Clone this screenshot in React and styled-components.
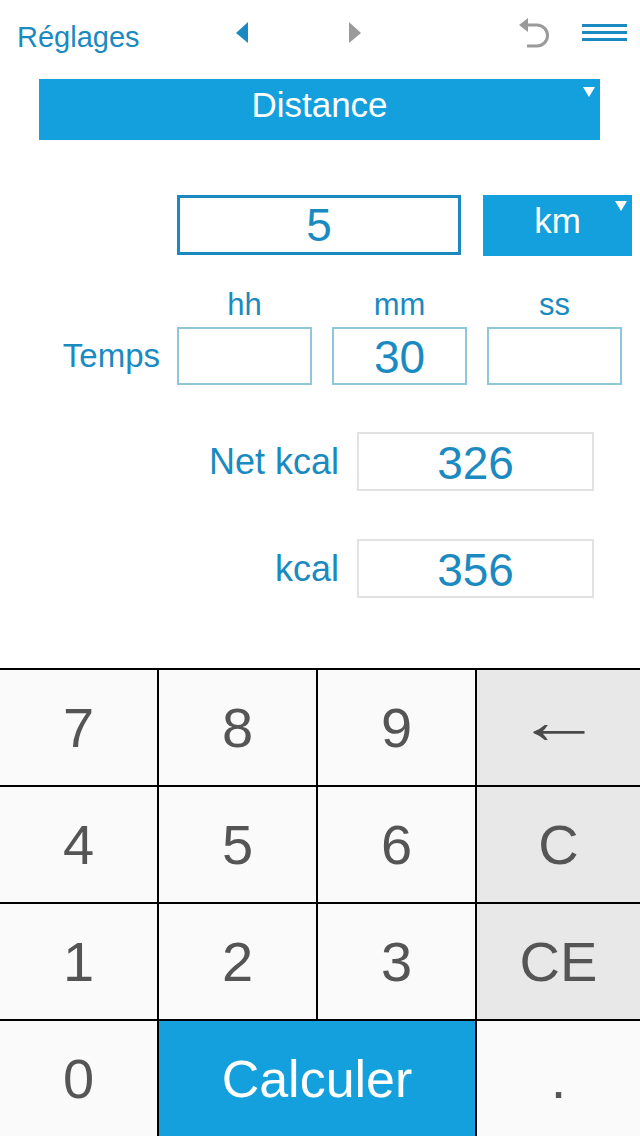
import React from "react";
import styled, { createGlobalStyle } from "styled-components";

const BLUE = "#1a8ac0";
const BRIGHT = "#13a0dd";

const Global = createGlobalStyle`
  html, body { margin: 0; padding: 0; background: #fff; }
  body { font-family: "Liberation Sans", Arial, Helvetica, sans-serif; }
  * { box-sizing: border-box; }
`;

const Page = styled.div`
  width: 640px;
  min-height: 100vh;
  display: flex;
  flex-direction: column;
  background: #fff;
`;

const Header = styled.div`
  height: 72px;
  display: flex;
  align-items: center;
`;

const Title = styled.div`
  flex: 0 0 235px;
  padding-left: 17px;
  color: ${BLUE};
  font-size: 29px;
  padding-top: 2px;
`;

const NavGroup = styled.div`
  display: flex;
  align-items: center;
  gap: 99px;
  margin-top: -6px;
`;

const Spacer = styled.div`
  flex: 1;
`;

const Actions = styled.div`
  display: flex;
  align-items: center;
  gap: 30px;
  padding-right: 13px;
  margin-top: -6px;
`;

const SelectBar = styled.div`
  position: relative;
  margin: 7px 40px 0 39px;
  height: 61px;
  background: ${BRIGHT};
  color: #fff;
  font-size: 35px;
  display: flex;
  align-items: center;
  justify-content: center;
  padding-bottom: 10px;
`;

const Caret = styled.span`
  position: absolute;
  top: ${(p) => p.$top}px;
  right: ${(p) => p.$right}px;
  width: 0;
  height: 0;
  border-left: 6px solid transparent;
  border-right: 6px solid transparent;
  border-top: 10px solid #fff;
`;

const DistanceRow = styled.div`
  display: flex;
  gap: 22px;
  padding-left: 177px;
  margin-top: 55px;
`;

const MainInput = styled.div`
  width: 284px;
  height: 60px;
  border: 3px solid ${BLUE};
  color: ${BLUE};
  font-size: 46px;
  display: flex;
  align-items: center;
  justify-content: center;
`;

const UnitButton = styled.div`
  position: relative;
  width: 149px;
  height: 61px;
  background: ${BRIGHT};
  color: #fff;
  font-size: 35px;
  display: flex;
  align-items: center;
  justify-content: center;
  padding-bottom: 10px;
`;

const TimeGrid = styled.div`
  display: grid;
  grid-template-columns: 157px repeat(3, 135px);
  grid-template-rows: 36px 58px;
  column-gap: 20px;
  row-gap: 4px;
  margin-top: 31px;
  align-items: center;
`;

const UnitLabel = styled.div`
  grid-row: 1;
  grid-column: ${(p) => p.$col};
  text-align: center;
  color: ${BLUE};
  font-size: 31px;
  line-height: 36px;
`;

const RowLabel = styled.div`
  text-align: right;
  color: ${BLUE};
  font-size: ${(p) => p.$size || 36}px;
  margin-right: ${(p) => p.$shift || 0}px;
`;

const TimeLabel = styled(RowLabel)`
  grid-row: 2;
  grid-column: 1;
`;

const TimeBox = styled.div`
  grid-row: 2;
  grid-column: ${(p) => p.$col};
  height: 58px;
  border: 2px solid #8ec6da;
  color: ${BLUE};
  font-size: 46px;
  display: flex;
  align-items: center;
  justify-content: center;
  padding-top: 2px;
`;

const Results = styled.div`
  display: grid;
  grid-template-columns: 339px 237px;
  column-gap: 18px;
  row-gap: 48px;
  margin-top: 47px;
  align-items: center;
`;

const ResultBox = styled.div`
  height: 59px;
  border: 2px solid #e2e2e2;
  color: ${BLUE};
  font-size: 46px;
  display: flex;
  align-items: center;
  justify-content: center;
  padding-top: 3px;
`;

const Keypad = styled.div`
  margin-top: auto;
  display: grid;
  grid-template-columns: 157px 157px 157px 1fr;
  grid-auto-rows: 115px;
  gap: 2px;
  border-top: 2px solid #000;
  background: #000;
`;

const Key = styled.div`
  grid-column: span ${(p) => p.$span || 1};
  background: ${(p) =>
    p.$variant === "primary" ? BRIGHT : p.$variant === "fn" ? "#e8e8e8" : "#fafafa"};
  color: ${(p) => (p.$variant === "primary" ? "#fff" : "#555")};
  font-size: ${(p) => p.$size || 56}px;
  display: flex;
  align-items: center;
  justify-content: center;
  line-height: 1;
`;

const BackGlyph = styled.span`
  display: inline-block;
  font-size: 64px;
  color: #4a4a4a;
  transform: scaleX(1.35);
  margin-top: -14px;
`;

const UndoIcon = () => (
  <svg width="36" height="36" viewBox="0 0 36 36">
    <path d="M11 31 H21 A10.5 10.5 0 0 0 21 10 H10" fill="none" stroke="#9a9a9a" strokeWidth="3" />
    <polygon points="3,10 12,3 12,17" fill="#9a9a9a" />
  </svg>
);

const MenuIcon = () => (
  <svg width="45" height="20" viewBox="0 0 45 20">
    <rect x="0" y="1" width="45" height="3" fill={BLUE} />
    <rect x="0" y="8" width="45" height="3" fill={BLUE} />
    <rect x="0" y="15" width="45" height="3" fill={BLUE} />
  </svg>
);

const Arrow = ({ dir, color }) => (
  <svg width="14" height="22" viewBox="0 0 14 22">
    {dir === "left" ? (
      <polygon points="13,0 1,11 13,21" fill={color} />
    ) : (
      <polygon points="1,0 13,11 1,21" fill={color} />
    )}
  </svg>
);

export default function App() {
  const keys = [
    ["7"], ["8"], ["9"], ["←", "fn"],
    ["4"], ["5"], ["6"], ["C", "fn"],
    ["1"], ["2"], ["3"], ["CE", "fn"],
  ];
  return (
    <Page>
      <Global />
      <Header>
        <Title>Réglages</Title>
        <NavGroup>
          <Arrow dir="left" color={BLUE} />
          <Arrow dir="right" color="#9a9a9a" />
        </NavGroup>
        <Spacer />
        <Actions>
          <UndoIcon />
          <MenuIcon />
        </Actions>
      </Header>

      <SelectBar>
        Distance
        <Caret $top={8} $right={5} />
      </SelectBar>

      <DistanceRow>
        <MainInput>5</MainInput>
        <UnitButton>
          km
          <Caret $top={6} $right={5} />
        </UnitButton>
      </DistanceRow>

      <TimeGrid>
        <UnitLabel $col={2}>hh</UnitLabel>
        <UnitLabel $col={3}>mm</UnitLabel>
        <UnitLabel $col={4}>ss</UnitLabel>
        <TimeLabel $size={33} $shift={-3}>Temps</TimeLabel>
        <TimeBox $col={2} />
        <TimeBox $col={3}>30</TimeBox>
        <TimeBox $col={4} />
      </TimeGrid>

      <Results>
        <RowLabel>Net kcal</RowLabel>
        <ResultBox>326</ResultBox>
        <RowLabel>kcal</RowLabel>
        <ResultBox>356</ResultBox>
      </Results>

      <Keypad>
        {keys.map(([label, variant]) => (
          <Key key={label} $variant={variant}>
            {label === "←" ? <BackGlyph>{label}</BackGlyph> : label}
          </Key>
        ))}
        <Key>0</Key>
        <Key $span={2} $variant="primary" $size={52}>
          Calculer
        </Key>
        <Key>.</Key>
      </Keypad>
    </Page>
  );
}
